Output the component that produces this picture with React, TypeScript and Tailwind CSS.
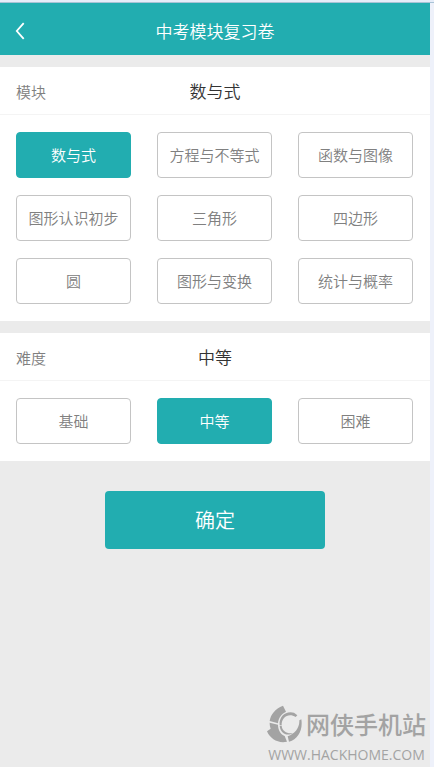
import { useState } from 'react';

const MODULOS = ['数与式', '方程与不等式', '函数与图像', '图形认识初步', '三角形', '四边形', '圆', '图形与变换', '统计与概率'];
const NIVELES = ['基础', '中等', '困难'];

type GrupoProps = {
  titulo: string;
  opciones: string[];
  valor: string;
  onChange: (opcion: string) => void;
};

function Grupo({ titulo, opciones, valor, onChange }: GrupoProps) {
  return (
    <section className="bg-white">
      <div className="grid h-12 grid-cols-[1fr_auto_1fr] items-baseline border-b border-[#f4f4f4] px-4 leading-[48px]">
        <h2 className="text-[15px] text-[#808080]">{titulo}</h2>
        <span className="text-[17px] text-[#333]">{valor}</span>
      </div>
      <div className="grid grid-cols-3 gap-x-[26px] gap-y-[17px] py-[17px] pr-[17px] pl-4">
        {opciones.map((opcion) => (
          <button
            key={opcion}
            type="button"
            aria-pressed={opcion === valor}
            onClick={() => onChange(opcion)}
            className={`h-[46px] rounded-[4px] border text-[15px] whitespace-nowrap ${
              opcion === valor ? 'border-[#22adb0] bg-[#22adb0] text-white' : 'border-[#c4c4c4] bg-white text-[#808080]'
            }`}
          >
            {opcion}
          </button>
        ))}
      </div>
    </section>
  );
}

export default function App() {
  const [modulo, setModulo] = useState('数与式');
  const [nivel, setNivel] = useState('中等');

  return (
    <div className="flex min-h-screen flex-col border-r-4 border-[#eef1fa] bg-[#ebebeb] font-['Noto_Sans_CJK_SC',sans-serif] font-[350]">
      <div className="-mr-1 h-[3px] border-b border-[#a9c3d6] bg-[#e6edf9]"></div>

      <header className="grid h-[52px] grid-cols-[1fr_auto_1fr] items-center bg-[#22adb0] px-[15px] pt-1 text-white">
        <button type="button" aria-label="返回" className="flex h-10 w-10 items-center">
          <svg className="h-[18px] w-[10px]" viewBox="0 0 10 18" fill="none" stroke="currentColor" strokeWidth="1.8">
            <path d="M8.700 1.200 1.800 9l6.900 7.800" />
          </svg>
        </button>
        <h1 className="text-[17px] leading-6">中考模块复习卷</h1>
      </header>

      <main className="flex flex-col gap-3 pt-3">
        <Grupo titulo="模块" opciones={MODULOS} valor={modulo} onChange={setModulo} />
        <Grupo titulo="难度" opciones={NIVELES} valor={nivel} onChange={setNivel} />
        <button type="button" className="mx-auto mt-[18px] h-[58px] w-[51%] rounded-[4px] bg-[#22adb0] text-[20px] text-white">
          确定
        </button>
      </main>

      {/* marca del sitio */}
      <footer className="mt-auto flex flex-col self-end pr-1 pb-1 text-[#a3a3a3]">
        <div className="flex items-center gap-1">
          <svg className="h-[38px] w-[35px]" viewBox="0 0 105 114" fill="currentColor">
            <path d="M48 2C24 12 11 28 8 48l25 7C34 39 43 27 57 20z" />
            <path d="M8 53c0 7 1 12 3 18L0 79c10 24 35 37 60 31l-7-17C40 87 33 74 33 59z" />
            <path d="M103 43c5 31-9 59-37 67l-4-16C84 86 98 69 97 46z" />
            <path d="M38 60c-3-27 20-44 43-37l10 8-5 5C66 22 43 36 44 61z" />
            <path d="M38 62c2 23 22 33 40 22-15 4-33-5-34-22z" />
          </svg>
          <span className="text-[24px] leading-[34px] font-medium">网侠手机站</span>
        </div>
        <span className="pt-1 text-center font-['Open_Sans',sans-serif] text-[14px] leading-4 font-medium">WWW.HACKHOME.COM</span>
      </footer>
    </div>
  );
}
